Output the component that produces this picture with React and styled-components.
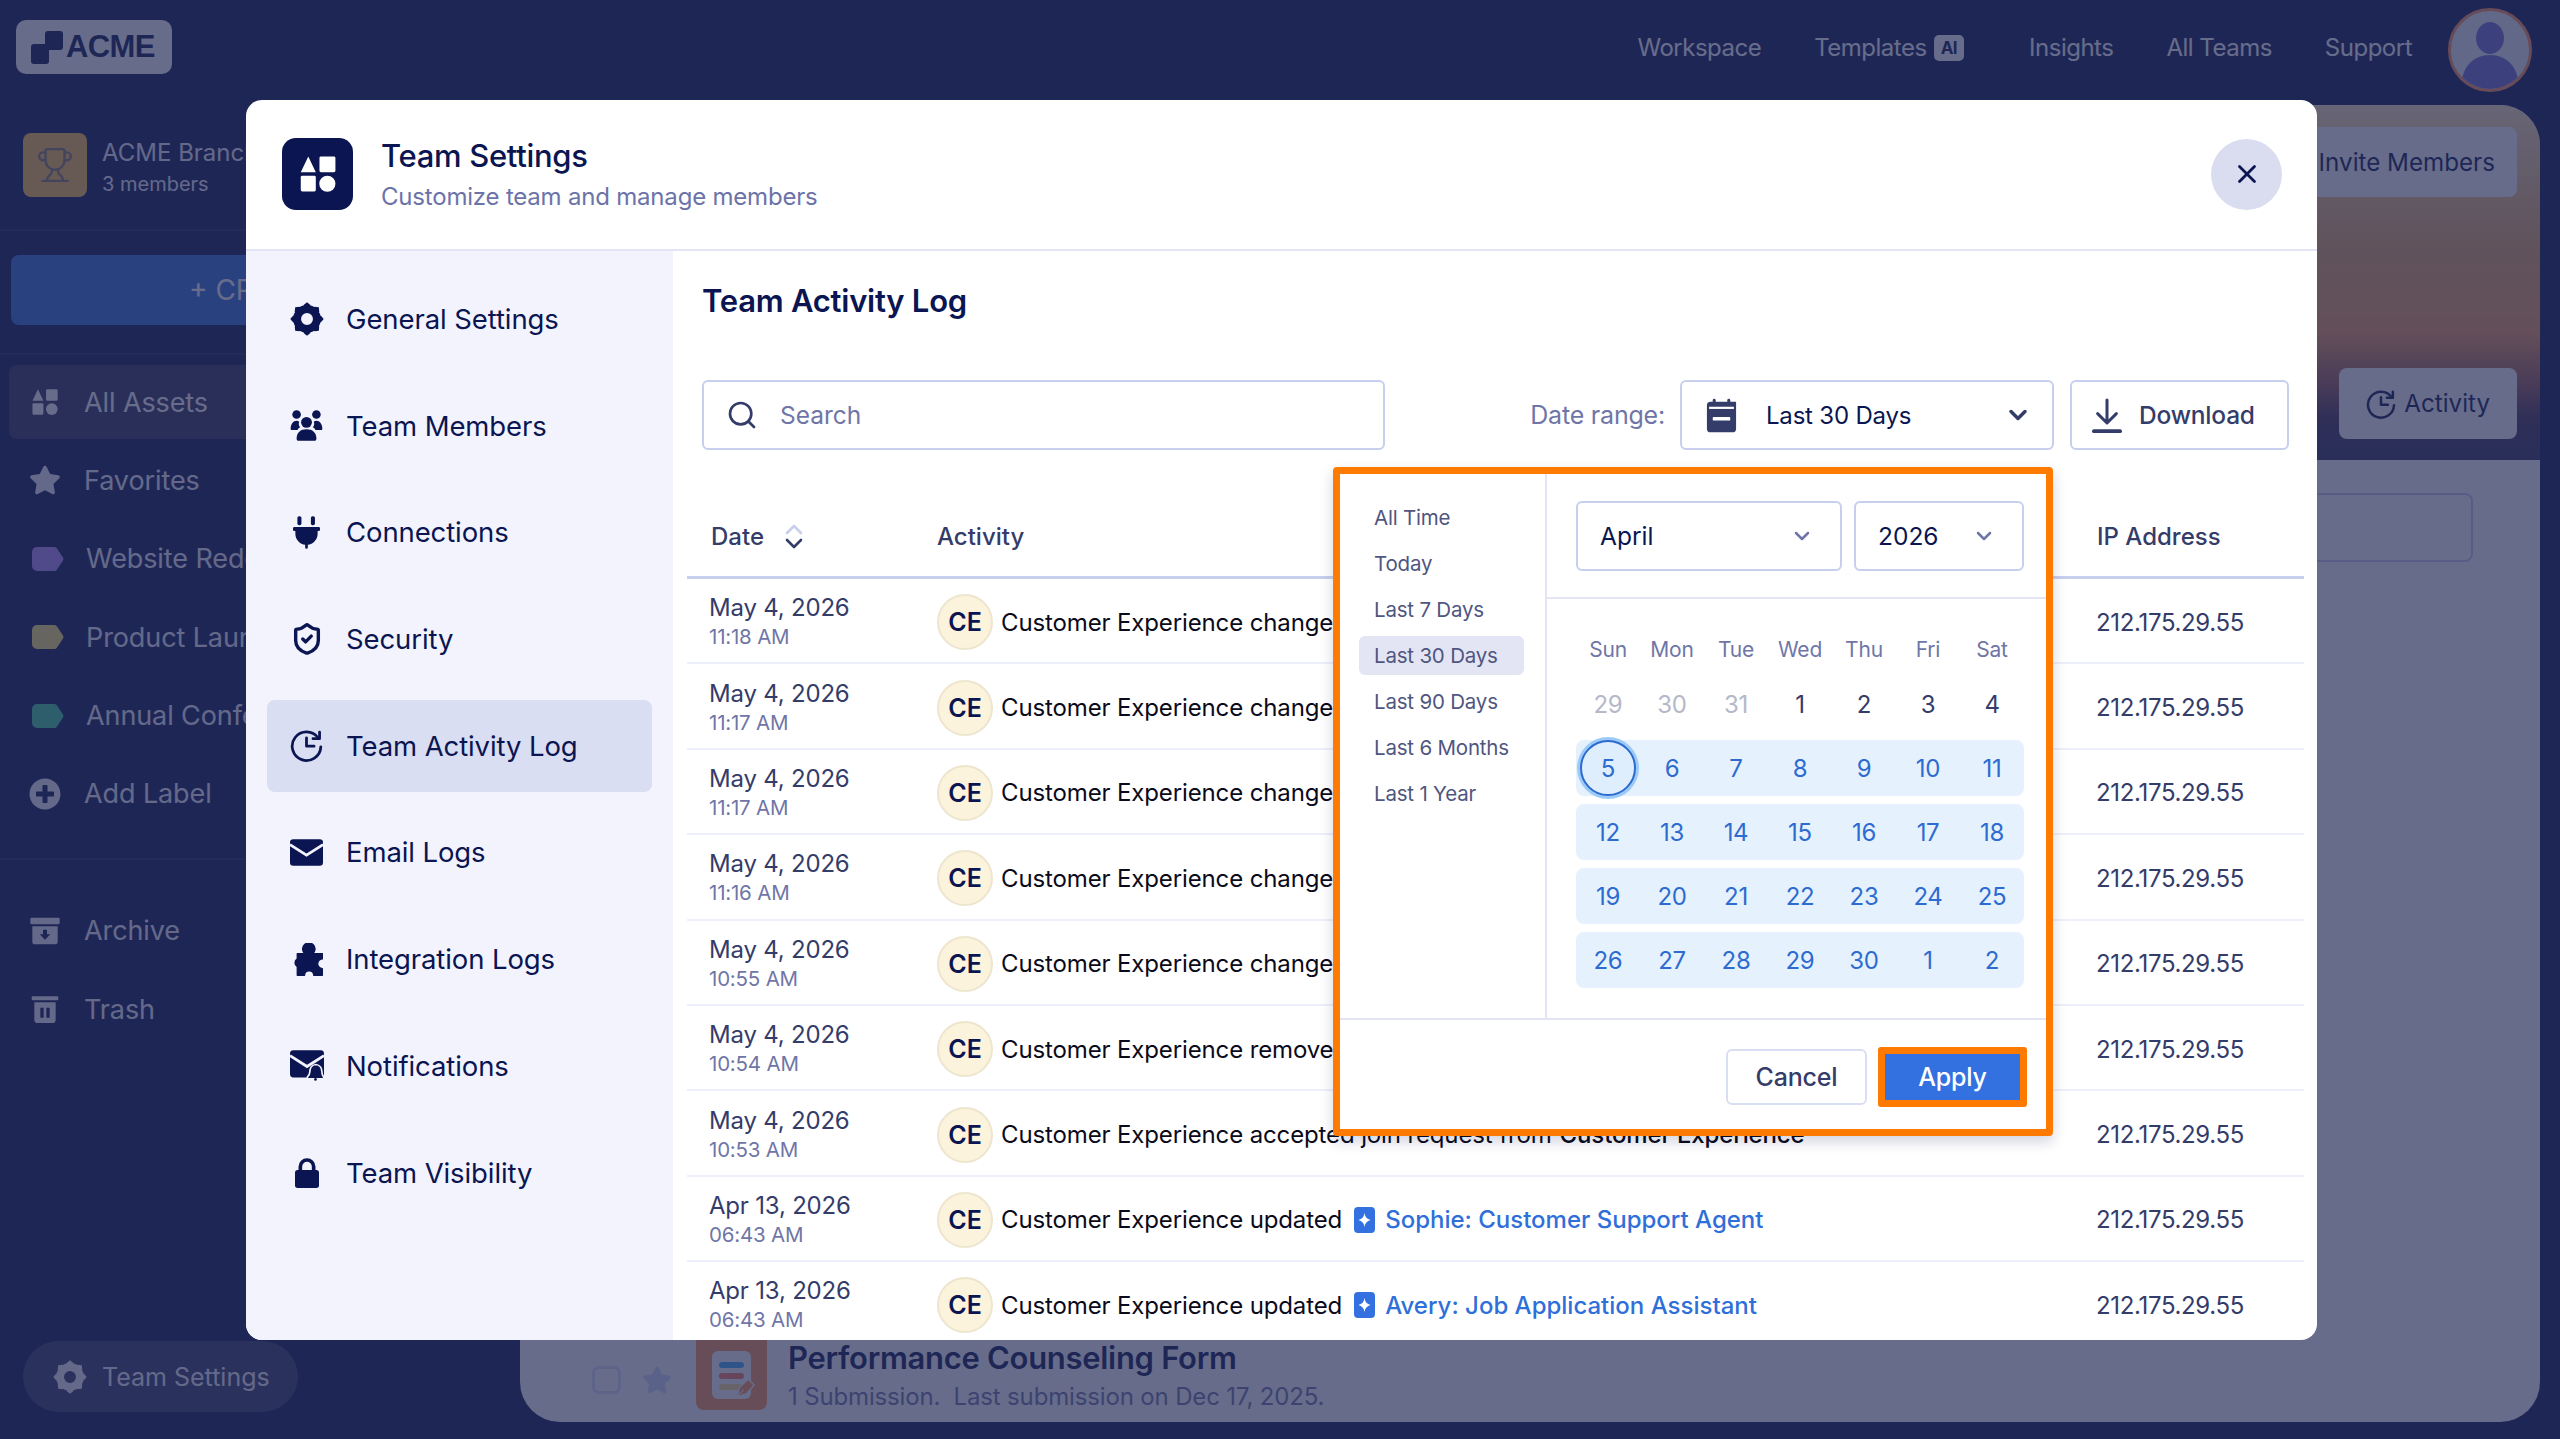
import styled, { createGlobalStyle } from 'styled-components';
import { FaStar, FaPlusCircle } from 'react-icons/fa';
import { ChevronDown, Search, ShieldCheck, Trophy, X } from 'lucide-react';

const FONT = `Inter, "Noto Sans", sans-serif`;

const GlobalStyle = createGlobalStyle`
  html, body, #root { height: 100%; margin: 0; }
  body { font-family: ${FONT}; overflow: hidden; background: #0a1551; }
  * { box-sizing: border-box; }
`;

const Page = styled.div`
  position: relative;
  height: 100vh;
  display: grid;
  grid-template-columns: 520px 1fr;
  grid-template-rows: 100px 1fr;
  background: #0a1551;
  overflow: hidden;
`;

const TopBar = styled.header`
  grid-column: 1 / 3;
  display: flex;
  align-items: center;
  padding: 0 28px 6px 16px;
`;

const Logo = styled.div`
  width: 156px;
  height: 54px;
  background: #fff;
  border-radius: 10px;
  display: flex;
  align-items: center;
  gap: 3px;
  padding-left: 15px;
  color: #0a1551;
  font: 700 31px "Liberation Sans", sans-serif;
  letter-spacing: -0.6px;
`;

const TopNav = styled.nav`
  margin-left: auto;
  display: flex;
  align-items: center;
  gap: 53px;
  color: #fff;
  font-size: 24px;
  letter-spacing: -0.5px;
`;

const AiBadge = styled.span`
  display: inline-block;
  margin-left: 7px;
  padding: 3px 7px;
  border-radius: 5px;
  background: #fff;
  color: #0a1551;
  font-size: 17px;
  font-weight: 700;
  vertical-align: 2px;
`;

const Templates = styled.span`
  margin-right: 12px;
`;

const Avatar = styled.div`
  width: 84px;
  height: 84px;
  margin-left: 36px;
  margin-top: 6px;
  border-radius: 50%;
  border: 3px solid #ff8f57;
  background: #eef4f8;
  overflow: hidden;
`;

const Sidebar = styled.aside`
  display: flex;
  flex-direction: column;
  color: #f3f3fe;
  white-space: nowrap;
  overflow: hidden;
`;

const TeamInfo = styled.div`
  height: 131px;
  display: flex;
  align-items: center;
  gap: 15px;
  padding-left: 23px;
  border-bottom: 2px solid rgba(255, 255, 255, 0.08);
`;

const TeamIcon = styled.div`
  width: 64px;
  height: 64px;
  border-radius: 8px;
  background: #ffc44d;
  display: grid;
  place-items: center;
  color: #8a7a6a;
`;

const TeamText = styled.div`
  padding-top: 9px;
`;

const TeamName = styled.div`
  font-size: 24px;
  line-height: 30px;
`;

const TeamCount = styled.div`
  font-size: 20px;
  line-height: 32px;
`;

const CreateWrap = styled.div`
  height: 124px;
  padding: 24px 0 0 11px;
  border-bottom: 2px solid rgba(255, 255, 255, 0.08);
`;

const CreateButton = styled.div`
  width: 480px;
  height: 70px;
  border-radius: 8px;
  background: #326edc;
  color: #fff;
  font-size: 28px;
  display: flex;
  align-items: center;
  padding-left: 178px;
`;

const SideList = styled.div`
  display: flex;
  flex-direction: column;
  gap: 4.4px;
  padding: 10px 9px 27px;
  border-bottom: ${(p) => (p.$line ? '2px solid rgba(255, 255, 255, 0.08)' : 'none')};
  padding-top: ${(p) => (p.$line ? '10px' : '34px')};
`;

const SideItem = styled.div`
  height: 74px;
  display: flex;
  align-items: center;
  gap: ${(p) => (p.$label ? '22px' : '23px')};
  padding-left: ${(p) => (p.$label ? '23px' : '20px')};
  border-radius: 8px;
  font-size: 27px;
  letter-spacing: -0.1px;
  background: ${(p) => (p.$active ? '#2f325d' : 'transparent')};
  color: ${(p) => (p.$active ? '#fff' : '#f3f3fe')};
  svg { flex: none; }
`;

const Tag = styled.svg`
  width: 32px;
  height: 24px;
  color: ${(p) => p.$color};
`;

const SettingsPill = styled.div`
  margin: auto 0 27px 23px;
  width: 275px;
  height: 71px;
  border-radius: 36px;
  background: #353964;
  display: flex;
  align-items: center;
  gap: 15px;
  padding-left: 30px;
  font-size: 25px;
`;

const Main = styled.main`
  margin: 5px 20px 17px 0;
  border-radius: 40px;
  background: #fff;
  display: flex;
  flex-direction: column;
  overflow: hidden;
`;

const Hero = styled.div`
  height: 355px;
  flex: none;
  padding: 22px 23px 21px;
  display: flex;
  flex-direction: column;
  align-items: flex-end;
  justify-content: space-between;
  background: linear-gradient(180deg, #fde6bb 0%, #e6aa64 40%, #f39d5d 64%, #a06157 78%, #463557 88%, #2f3560 100%);
`;

const HeroButton = styled.div`
  height: ${(p) => p.$h}px;
  padding: 0 ${(p) => p.$pad}px;
  display: flex;
  align-items: center;
  gap: 8px;
  border-radius: 8px;
  background: #fff;
  color: #0a1551;
  font-size: 24.2px;
`;

const FilterBox = styled.div`
  margin: 33px 67px 0 auto;
  width: 700px;
  height: 69px;
  flex: none;
  border: 2px solid #c8ceed;
  border-radius: 8px;
`;

const FormRow = styled.div`
  margin-top: auto;
  padding: 0 0 5px 72px;
  display: flex;
  align-items: flex-end;
`;

const CheckBox = styled.div`
  width: 29px;
  height: 28px;
  margin: 0 21px 23px 0;
  border: 3px solid #dae4ff;
  border-radius: 7px;
`;

const StarSlot = styled.span`
  display: flex;
  margin-bottom: 22px;
  color: #d5deff;
`;

const FormIcon = styled.div`
  position: relative;
  width: 71px;
  height: 84px;
  border-radius: 8px;
  background: #ff9657;
  margin: 0 21px 7px 24px;
  padding: 25px 16px 11px;
  display: flex;
`;

const FormDoc = styled.div`
  flex: 1;
  border-radius: 6px;
  background: #fff;
  padding: 11px 7px 0;
  display: flex;
  flex-direction: column;
  gap: 5px;
`;

const FormLine = styled.span`
  height: 6px;
  border-radius: 3px;
  background: ${(p) => p.$color};
`;

const FormPen = styled.svg`
  position: absolute;
  right: 10px;
  bottom: 11px;
  width: 23px;
  height: 24px;
`;

const FormText = styled.div``;

const FormTitle = styled.div`
  color: #0a1551;
  font-size: 31px;
  font-weight: 600;
  letter-spacing: -0.3px;
  line-height: 38px;
`;

const FormSub = styled.div`
  color: #6f76a7;
  font-size: 24px;
  letter-spacing: -0.15px;
  line-height: 40px;
  white-space: pre;
`;

const Overlay = styled.div`
  position: absolute;
  inset: 0;
  padding: 100px 243px 99px 246px;
  background: rgba(39, 45, 88, 0.7);
  display: flex;
`;

const Modal = styled.section`
  flex: 1;
  min-width: 0;
  border-radius: 16px;
  background: #fff;
  display: flex;
  flex-direction: column;
  overflow: hidden;
`;

const ModalHeader = styled.header`
  height: 151px;
  flex: none;
  display: flex;
  align-items: center;
  gap: 28px;
  padding: 0 35px 1px 36px;
  border-bottom: 2px solid #e3e5f5;
`;

const HeaderIcon = styled.div`
  width: 71px;
  height: 72px;
  border-radius: 14px;
  background: #0a1551;
  display: grid;
  place-items: center;
  color: #fff;
`;

const HeaderText = styled.div`
  flex: 1;
  padding-top: 4px;
`;

const ModalTitle = styled.div`
  color: #0a1551;
  font-size: 31px;
  font-weight: 500;
  line-height: 42px;
  letter-spacing: -0.3px;
`;

const ModalSub = styled.div`
  color: #6c73a8;
  font-size: 24px;
  line-height: 40px;
  letter-spacing: -0.2px;
`;

const CloseButton = styled.div`
  width: 71px;
  height: 71px;
  border-radius: 50%;
  background: #dadcf0;
  display: grid;
  place-items: center;
  color: #0a1551;
`;

const ModalBody = styled.div`
  flex: 1;
  min-height: 0;
  display: flex;
`;

const SettingsNav = styled.nav`
  width: 427px;
  flex: none;
  padding: 22px 21px 0 21px;
  background: #f3f3fe;
  display: flex;
  flex-direction: column;
  gap: 14.7px;
`;

const SettingsItem = styled.div`
  height: 92px;
  flex: none;
  display: flex;
  align-items: center;
  gap: 22px;
  padding-left: 22px;
  border-radius: 8px;
  color: #0a1551;
  font-size: 27.5px;
  letter-spacing: -0.1px;
  background: ${(p) => (p.$active ? '#dadef3' : 'transparent')};
`;

const IconSlot = styled.span`
  width: 35px;
  height: 35px;
  flex: none;
  display: grid;
  place-items: center;
`;

const Content = styled.div`
  flex: 1;
  min-width: 0;
  padding: 30px 28px 0 29px;
  overflow: hidden;
`;

const ContentTitle = styled.h2`
  margin: 0 0 59px;
  color: #0a1551;
  font-size: 31px;
  font-weight: 600;
  line-height: 40px;
  letter-spacing: -0.25px;
`;

const Toolbar = styled.div`
  display: flex;
  align-items: center;
  height: 70px;
`;

const SearchBox = styled.div`
  width: 683px;
  height: 70px;
  display: flex;
  align-items: center;
  gap: 22px;
  padding-left: 22px;
  border: 2px solid #c8ceed;
  border-radius: 6px;
  color: #6f76a7;
  font-size: 24.5px;
  svg { color: #343c6a; }
`;

const RangeLabel = styled.span`
  margin-left: auto;
  margin-right: 15px;
  color: #6f76a7;
  font-size: 25px;
  letter-spacing: -0.2px;
`;

const RangeWrap = styled.div`
  position: relative;
  margin-right: 16px;
`;

const RangeSelect = styled.div`
  width: 374px;
  height: 70px;
  display: flex;
  align-items: center;
  padding: 0 20px 0 24px;
  border: 2px solid #c8ceed;
  border-radius: 6px;
  color: #0a1551;
  font-size: 24px;
  letter-spacing: -0.2px;
  span { margin-left: 29px; flex: 1; }
`;

const DownloadButton = styled.div`
  width: 219px;
  height: 70px;
  display: flex;
  align-items: center;
  gap: 17px;
  padding-left: 20px;
  border: 2px solid #c8ceed;
  border-radius: 6px;
  color: #343c6a;
  font-size: 24.5px;
  font-weight: 500;
  letter-spacing: -0.2px;
`;

const Table = styled.div`
  margin: 40px 0 0 -15px;
  width: 1617px;
`;

const Row = styled.div`
  display: grid;
  grid-template-columns: 250px 1160px 207px;
  align-items: center;
  height: ${(p) => (p.$head ? '89px' : '85.4px')};
  padding-top: ${(p) => (p.$head ? '6px' : '3px')};
  border-bottom: ${(p) => (p.$head ? '3px solid #c8ceed' : '2px solid #eceef9')};
  color: ${(p) => (p.$head ? '#343c6a' : '#0a1551')};
  font-size: 24px;
  font-weight: ${(p) => (p.$head ? 500 : 400)};
`;

const HeadDate = styled.div`
  padding-left: 24px;
  display: flex;
  align-items: center;
  gap: 21px;
`;

const DateCell = styled.div`
  padding-left: 22px;
`;

const DateText = styled.div`
  color: #343c6a;
  font-size: 24px;
  line-height: 29px;
  letter-spacing: -0.2px;
`;

const TimeText = styled.div`
  color: #6f76a7;
  font-size: 20.5px;
  line-height: 29px;
  letter-spacing: -0.2px;
`;

const ActivityCell = styled.div`
  display: flex;
  align-items: center;
  gap: 8px;
  color: #0a0a1a;
  letter-spacing: -0.13px;
  white-space: nowrap;
`;

const Initials = styled.span`
  width: 56px;
  height: 56px;
  flex: none;
  border-radius: 50%;
  background: #fbf3dc;
  border: 2px solid #eee5cf;
  display: grid;
  place-items: center;
  color: #0a1551;
  font-size: 25px;
  font-weight: 600;
`;

const Strong = styled.span`
  font-weight: 500;
`;

const AgentLink = styled.span`
  display: inline-flex;
  align-items: center;
  gap: 10px;
  margin-left: 4px;
  color: #2e6fd9;
  font-weight: 500;
  letter-spacing: 0;
`;

const IpCell = styled.div`
  color: #343c6a;
  letter-spacing: -0.35px;
  margin-left: -1px;
`;

const DatePopup = styled.div`
  position: absolute;
  top: calc(100% + 17px);
  right: 1px;
  width: 720px;
  height: 669px;
  border: 7px solid #ff7a00;
  border-radius: 4px;
  background: #fff;
  box-shadow: 0 6px 14px rgba(10, 21, 81, 0.18);
  display: flex;
  flex-direction: column;
  z-index: 2;
`;

const PopupBody = styled.div`
  height: 546px;
  flex: none;
  display: flex;
  border-bottom: 2px solid #e3e5f5;
`;

const Presets = styled.div`
  width: 207px;
  flex: none;
  padding: 24px 0 0 19px;
  border-right: 2px solid #e3e5f5;
  display: flex;
  flex-direction: column;
  gap: 7px;
`;

const Preset = styled.div`
  width: 165px;
  height: 39px;
  padding-left: 15px;
  display: flex;
  align-items: center;
  border-radius: 6px;
  color: #4f567f;
  font-size: 20.5px;
  letter-spacing: -0.2px;
  background: ${(p) => (p.$active ? '#e3e5f5' : 'transparent')};
`;

const Calendar = styled.div`
  flex: 1;
`;

const CalendarHead = styled.div`
  height: 125px;
  display: flex;
  align-items: center;
  gap: 12px;
  padding-left: 29px;
  border-bottom: 2px solid #e3e5f5;
`;

const MonthSelect = styled.div`
  width: ${(p) => p.$w}px;
  height: 70px;
  display: flex;
  align-items: center;
  justify-content: space-between;
  padding: 0 26px 0 22px;
  border: 2px solid #c8ceed;
  border-radius: 6px;
  color: #0a1551;
  font-size: 24.5px;
  svg { color: #6f76a7; }
`;

const CalendarGrid = styled.div`
  padding: 33px 0 0 29px;
  display: flex;
  flex-direction: column;
  gap: 8px;
`;

const Week = styled.div`
  width: 448px;
  display: grid;
  grid-template-columns: repeat(7, 64px);
  height: ${(p) => (p.$head ? '34px' : '56px')};
  margin-bottom: ${(p) => (p.$head ? '2px' : '0')};
  border-radius: 8px;
  background: ${(p) => (p.$band ? '#e5f2fe' : 'transparent')};
`;

const WeekDay = styled.div`
  display: grid;
  place-items: center;
  color: #6f76a7;
  font-size: 21px;
  letter-spacing: -0.2px;
`;

const Day = styled.div`
  display: grid;
  place-items: center;
  font-size: 24px;
  letter-spacing: -0.3px;
  color: ${(p) => ({ muted: '#b5b8c9', plain: '#343c6a', range: '#2e6bd0' })[p.$tone]};
`;

const StartDay = styled.span`
  width: 56px;
  height: 56px;
  display: grid;
  place-items: center;
  border-radius: 50%;
  border: 2px solid #2e6bd0;
  background: #dfeefd;
  box-shadow: 0 0 0 3px #9ccbf8;
`;

const PopupFooter = styled.div`
  flex: 1;
  display: flex;
  align-items: center;
  justify-content: flex-end;
  gap: 11px;
  padding: 4px 19px 0 0;
`;

const CancelButton = styled.div`
  width: 141px;
  height: 56px;
  display: grid;
  place-items: center;
  border: 2px solid #dadef3;
  border-radius: 6px;
  color: #343c6a;
  font-size: 25px;
  font-weight: 500;
  letter-spacing: -0.2px;
`;

const ApplyButton = styled.div`
  width: 149px;
  height: 60px;
  display: grid;
  place-items: center;
  border: 7px solid #ff7a00;
  border-radius: 3px;
  background: #3371e0;
  color: #fff;
  font-size: 25px;
  font-weight: 500;
  letter-spacing: -0.2px;
`;

const AssetsIcon = ({ size = 35 }) => (
  <svg width={size} height={size} viewBox="0 0 24 24" fill="currentColor">
    <path d="M6.7 2.5 10.8 11H2.6z" />
    <rect x="12.8" y="2.5" width="8.7" height="8.5" rx="0.8" />
    <rect x="2.6" y="13" width="8.2" height="8.5" rx="0.8" />
    <circle cx="17.1" cy="17.3" r="4.4" />
  </svg>
);

const GearIcon = ({ size = 34 }) => (
  <svg width={size} height={size} viewBox="0 0 24 24">
    <g fill="currentColor">
      {[0, 45, 90, 135, 180, 225, 270, 315].map((a) => (
        <path key={a} d="M9.800 2 12 .2 14.200 2l1 4h-6.400z" transform={`rotate(${a} 12 12)`} />
      ))}
    </g>
    <circle cx="12" cy="12" r="7" fill="none" stroke="currentColor" strokeWidth="5.600" />
  </svg>
);

const PeopleIcon = () => (
  <svg width="33" height="31" viewBox="0 0 100 93" fill="currentColor">
    <circle cx="20" cy="13" r="13" />
    <circle cx="80" cy="13" r="13" />
    <circle cx="50" cy="37" r="16.500" />
    <path d="M2 56c0-14 8-24 18-24 3 0 6 1 8 3-3 6-1 13 3 17-4 2-6 4-8 8H6c-3 0-4-1-4-4z" />
    <path d="M98 56c0-14-8-24-18-24-3 0-6 1-8 3 3 6 1 13-3 17 4 2 6 4 8 8h17c3 0 4-1 4-4z" />
    <path d="M20 86c0-18 12-28 30-28s30 10 30 28c0 4-2 7-6 7H26c-4 0-6-3-6-7z" />
  </svg>
);

const ClockIcon = ({ size = 33 }) => (
  <svg width={size} height={size} viewBox="0 0 24 24" fill="none" stroke="currentColor" strokeWidth="2" strokeLinecap="round" strokeLinejoin="round">
    <path d="M20.500 6.500A10.400 10.400 0 1 0 22.400 13" />
    <path d="M21.500 2.200v4.800h-4.800" />
    <path d="M12 6.500v6h5.500" />
  </svg>
);

const PlugIcon = () => (
  <svg width="27" height="33" viewBox="0 0 80 97" fill="currentColor">
    <rect x="13" y="0" width="12" height="27" rx="5" />
    <rect x="53" y="0" width="12" height="27" rx="5" />
    <rect x="0" y="32" width="80" height="12" rx="4" />
    <path d="M7 44h66v8c0 18-14 31-29 33v8a4 4 0 0 1-8 0v-8C21 83 7 70 7 52z" />
  </svg>
);

const MailIcon = () => (
  <svg width="33" height="27" viewBox="0 0 100 80">
    <rect width="100" height="80" rx="10" fill="currentColor" />
    <path d="M0 16l50 32 50-32" fill="none" stroke="#f3f3fe" strokeWidth="8" />
  </svg>
);

const PuzzleIcon = () => (
  <svg width="33" height="33" viewBox="0 0 100 100" fill="currentColor" stroke="currentColor" strokeWidth="4" strokeLinejoin="round">
    <path d="M22 32H45c-4-4-7-9-7-14a19 18 0 0 1 38 0c0 5-3 10-7 14h31V48A15 15 0 0 0 98 78V98H72A14 14 0 0 0 44 98H22V72A14 14 0 0 1 22 48z" />
  </svg>
);

const NotifyIcon = () => (
  <svg width="34" height="31" viewBox="0 0 100 90">
    <rect width="100" height="80" rx="10" fill="currentColor" />
    <path d="M0 16l50 32 50-32" fill="none" stroke="#f3f3fe" strokeWidth="8" />
    <path d="M76 42c-12 1-18 12-18 23 0 6-2 10-7 14v5h48v-5c-4-4-5-8-5-14 0-11-6-22-18-23z" fill="currentColor" stroke="#f3f3fe" strokeWidth="5" />
    <circle cx="75" cy="86" r="4" fill="currentColor" />
  </svg>
);

const LockIcon = () => (
  <svg width="24" height="30" viewBox="0 0 72 90" fill="currentColor">
    <rect y="36" width="72" height="54" rx="8" />
    <path d="M16 42V26a20 20 0 0 1 40 0v16" fill="none" stroke="currentColor" strokeWidth="11" />
  </svg>
);

const CalendarIcon = () => (
  <svg width="31" height="35" viewBox="0 0 20 24" fill="#343c6a">
    <rect x="4" y="0.500" width="2" height="4" rx="1" />
    <rect x="14" y="0.500" width="2" height="4" rx="1" />
    <path d="M2.500 3H20v18.500a2.500 2.500 0 0 1-2.500 2.500h-15A2.500 2.500 0 0 1 0 21.500v-16A2.500 2.500 0 0 1 2.500 3z" transform="translate(0 -0.500)" />
    <rect x="1.500" y="6" width="17" height="1.500" fill="#fff" />
    <rect x="4" y="13" width="12" height="2.500" rx="0.500" fill="#fff" />
  </svg>
);

const DownloadIcon = () => (
  <svg width="30" height="35" viewBox="0 0 24 28" fill="none" stroke="#343c6a" strokeWidth="2.400" strokeLinecap="round" strokeLinejoin="round">
    <path d="M12 1.500v18M4.500 12.500l7.500 7.500 7.500-7.500" />
    <path d="M1.500 26.500h21" strokeWidth="3" />
  </svg>
);

const SortIcon = () => (
  <svg width="18" height="25" viewBox="0 0 18 25" fill="none" strokeWidth="2.600" strokeLinecap="round" strokeLinejoin="round">
    <path d="M2 9l7-7 7 7" stroke="#c8ceed" />
    <path d="M2 16l7 7 7-7" stroke="#343c6a" />
  </svg>
);

const AgentIcon = () => (
  <svg width="21" height="26" viewBox="0 0 21 26">
    <rect width="21" height="26" rx="4" fill="#3371e0" />
    <path d="M10.500 6c.6 4 2.500 6 6 7-3.500 1-5.400 3-6 7-.6-4-2.500-6-6-7 3.500-1 5.400-3 6-7z" fill="#fff" />
  </svg>
);

const LabelTag = ({ color }) => (
  <Tag $color={color} viewBox="0 0 32 24" fill="currentColor">
    <path d="M5 0h17c1.300 0 2.300.5 3 1.500l6 9c.6.900.6 2.100 0 3l-6 9c-.7 1-1.700 1.500-3 1.500H5a5 5 0 0 1-5-5V5a5 5 0 0 1 5-5z" />
  </Tag>
);

const settingsItems = [
  { label: 'General Settings', icon: <GearIcon /> },
  { label: 'Team Members', icon: <PeopleIcon /> },
  { label: 'Connections', icon: <PlugIcon /> },
  { label: 'Security', icon: <ShieldCheck size={34} strokeWidth={2.400} /> },
  { label: 'Team Activity Log', icon: <ClockIcon />, active: true },
  { label: 'Email Logs', icon: <MailIcon /> },
  { label: 'Integration Logs', icon: <PuzzleIcon /> },
  { label: 'Notifications', icon: <NotifyIcon /> },
  { label: 'Team Visibility', icon: <LockIcon /> },
];

const logRows = [
  { date: 'May 4, 2026', time: '11:18 AM', text: 'Customer Experience changed' },
  { date: 'May 4, 2026', time: '11:17 AM', text: 'Customer Experience changed' },
  { date: 'May 4, 2026', time: '11:17 AM', text: 'Customer Experience changed' },
  { date: 'May 4, 2026', time: '11:16 AM', text: 'Customer Experience changed' },
  { date: 'May 4, 2026', time: '10:55 AM', text: 'Customer Experience changed' },
  { date: 'May 4, 2026', time: '10:54 AM', text: 'Customer Experience removed' },
  { date: 'May 4, 2026', time: '10:53 AM', text: 'Customer Experience accepted join request from', who: 'Customer Experience' },
  { date: 'Apr 13, 2026', time: '06:43 AM', text: 'Customer Experience updated', agent: 'Sophie: Customer Support Agent' },
  { date: 'Apr 13, 2026', time: '06:43 AM', text: 'Customer Experience updated', agent: 'Avery: Job Application Assistant' },
];

const presets = ['All Time', 'Today', 'Last 7 Days', 'Last 30 Days', 'Last 90 Days', 'Last 6 Months', 'Last 1 Year'];
const weekDays = ['Sun', 'Mon', 'Tue', 'Wed', 'Thu', 'Fri', 'Sat'];
const weeks = [
  [29, 30, 31, 1, 2, 3, 4],
  [5, 6, 7, 8, 9, 10, 11],
  [12, 13, 14, 15, 16, 17, 18],
  [19, 20, 21, 22, 23, 24, 25],
  [26, 27, 28, 29, 30, 1, 2],
];

function App() {
  return (
    <>
      <GlobalStyle />
      <Page>
        <TopBar>
          <Logo>
            <svg width="32" height="33" viewBox="0 0 32 33" fill="currentColor">
              <rect x="14" y="0" width="18" height="19" rx="3" />
              <rect x="0" y="13" width="18" height="20" rx="3" />
            </svg>
            ACME
          </Logo>
          <TopNav>
            <span>Workspace</span>
            <Templates>Templates<AiBadge>AI</AiBadge></Templates>
            <span>Insights</span>
            <span>All Teams</span>
            <span>Support</span>
          </TopNav>
          <Avatar>
            <svg width="78" height="78" viewBox="0 0 78 78" fill="#6e71d2">
              <ellipse cx="39" cy="27" rx="14" ry="16" />
              <path d="M10 78c0-22 12-34 29-34s29 12 29 34z" />
            </svg>
          </Avatar>
        </TopBar>

        <Sidebar>
          <TeamInfo>
            <TeamIcon><Trophy size={38} strokeWidth={1.500} /></TeamIcon>
            <TeamText>
              <TeamName>ACME Branch</TeamName>
              <TeamCount>3 members</TeamCount>
            </TeamText>
          </TeamInfo>
          <CreateWrap>
            <CreateButton>+ CREATE</CreateButton>
          </CreateWrap>
          <SideList $line>
            <SideItem $active><AssetsIcon size={32} />All Assets</SideItem>
            <SideItem><FaStar size={32} />Favorites</SideItem>
            <SideItem $label><LabelTag color="#b38cff" />Website Redesign</SideItem>
            <SideItem $label><LabelTag color="#ffe671" />Product Launch</SideItem>
            <SideItem $label><LabelTag color="#42cb99" />Annual Conference</SideItem>
            <SideItem><FaPlusCircle size={32} />Add Label</SideItem>
          </SideList>
          <SideList>
            <SideItem>
              <svg width="32" height="32" viewBox="0 0 24 24" fill="currentColor">
                <rect x="1" y="2" width="22" height="5" rx="1" />
                <path d="M2.500 8.500h19V20a2 2 0 0 1-2 2h-15a2 2 0 0 1-2-2zM10.500 11v3.500H8l4 4 4-4h-2.500V11z" fillRule="evenodd" />
              </svg>
              Archive
            </SideItem>
            <SideItem>
              <svg width="32" height="32" viewBox="0 0 24 24" fill="currentColor">
                <rect x="2" y="2.500" width="20" height="3" rx="1" />
                <path d="M4 7h16v13a2.500 2.500 0 0 1-2.500 2.500h-11A2.500 2.500 0 0 1 4 20zm4.500 4v7.500h2.500V11zm4.500 0v7.500h2.500V11z" fillRule="evenodd" />
              </svg>
              Trash
            </SideItem>
          </SideList>
          <SettingsPill><GearIcon size={34} />Team Settings</SettingsPill>
        </Sidebar>

        <Main>
          <Hero>
            <HeroButton $h={70} $pad={22}>Invite Members</HeroButton>
            <HeroButton $h={71} $pad={27}><ClockIcon size={30} />Activity</HeroButton>
          </Hero>
          <FilterBox />
          <FormRow>
            <CheckBox />
            <StarSlot><FaStar size={30} /></StarSlot>
            <FormIcon>
              <FormDoc>
                <FormLine $color="#43b0ff" />
                <FormLine $color="#ff7c64" />
                <FormLine $color="#ffe08c" />
              </FormDoc>
              <FormPen viewBox="0 0 24 24">
                <path d="M3 22l3-10 9-8 6 6-8 9z" fill="#ff9657" stroke="#fff" strokeWidth="1.500" strokeLinejoin="round" />
                <path d="M3 22l7-7" stroke="#fff" strokeWidth="1.200" />
              </FormPen>
            </FormIcon>
            <FormText>
              <FormTitle>Performance Counseling Form</FormTitle>
              <FormSub>1 Submission.  Last submission on Dec 17, 2025.</FormSub>
            </FormText>
          </FormRow>
        </Main>

        <Overlay>
          <Modal>
            <ModalHeader>
              <HeaderIcon><AssetsIcon size={44} /></HeaderIcon>
              <HeaderText>
                <ModalTitle>Team Settings</ModalTitle>
                <ModalSub>Customize team and manage members</ModalSub>
              </HeaderText>
              <CloseButton><X size={30} strokeWidth={2.200} /></CloseButton>
            </ModalHeader>
            <ModalBody>
              <SettingsNav>
                {settingsItems.map((item) => (
                  <SettingsItem key={item.label} $active={item.active}>
                    <IconSlot>{item.icon}</IconSlot>
                    {item.label}
                  </SettingsItem>
                ))}
              </SettingsNav>
              <Content>
                <ContentTitle>Team Activity Log</ContentTitle>
                <Toolbar>
                  <SearchBox><Search size={32} strokeWidth={2} />Search</SearchBox>
                  <RangeLabel>Date range:</RangeLabel>
                  <RangeWrap>
                    <RangeSelect>
                      <CalendarIcon />
                      <span>Last 30 Days</span>
                      <ChevronDown size={28} strokeWidth={3} color="#343c6a" />
                    </RangeSelect>
                    <DatePopup>
                      <PopupBody>
                        <Presets>
                          {presets.map((p) => (
                            <Preset key={p} $active={p === 'Last 30 Days'}>{p}</Preset>
                          ))}
                        </Presets>
                        <Calendar>
                          <CalendarHead>
                            <MonthSelect $w={266}>April<ChevronDown size={24} strokeWidth={2.500} /></MonthSelect>
                            <MonthSelect $w={170}>2026<ChevronDown size={24} strokeWidth={2.500} /></MonthSelect>
                          </CalendarHead>
                          <CalendarGrid>
                            <Week $head>
                              {weekDays.map((d) => <WeekDay key={d}>{d}</WeekDay>)}
                            </Week>
                            {weeks.map((week, w) => (
                              <Week key={w} $band={w > 0}>
                                {week.map((d, i) => (
                                  <Day key={i} $tone={w === 0 ? (i < 3 ? 'muted' : 'plain') : 'range'}>
                                    {d === 5 && w === 1 ? <StartDay>{d}</StartDay> : d}
                                  </Day>
                                ))}
                              </Week>
                            ))}
                          </CalendarGrid>
                        </Calendar>
                      </PopupBody>
                      <PopupFooter>
                        <CancelButton>Cancel</CancelButton>
                        <ApplyButton>Apply</ApplyButton>
                      </PopupFooter>
                    </DatePopup>
                  </RangeWrap>
                  <DownloadButton><DownloadIcon />Download</DownloadButton>
                </Toolbar>

                <Table>
                  <Row $head>
                    <HeadDate>Date<SortIcon /></HeadDate>
                    <div>Activity</div>
                    <div>IP Address</div>
                  </Row>
                  {logRows.map((row, i) => (
                    <Row key={i}>
                      <DateCell>
                        <DateText>{row.date}</DateText>
                        <TimeText>{row.time}</TimeText>
                      </DateCell>
                      <ActivityCell>
                        <Initials>CE</Initials>
                        {row.text}
                        {row.who && <Strong>{row.who}</Strong>}
                        {row.agent && <AgentLink><AgentIcon />{row.agent}</AgentLink>}
                      </ActivityCell>
                      <IpCell>212.175.29.55</IpCell>
                    </Row>
                  ))}
                </Table>
              </Content>
            </ModalBody>
          </Modal>
        </Overlay>
      </Page>
    </>
  );
}

export default App;
